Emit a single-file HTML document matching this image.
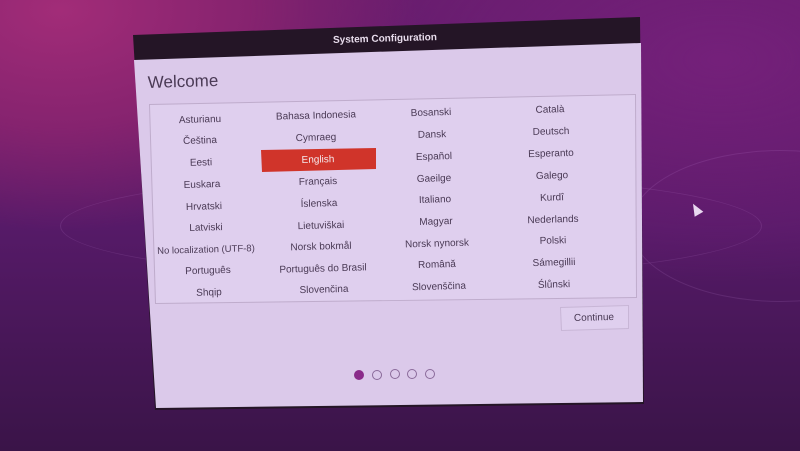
<!DOCTYPE html>
<html><head><meta charset="utf-8"><style>
html,body{margin:0;padding:0}
body{width:800px;height:451px;overflow:hidden;position:relative;font-family:"Liberation Sans",sans-serif;
background:radial-gradient(ellipse 420px 260px at 60px 10px,#a22c78 0%,#86236f 45%,transparent 85%),
radial-gradient(ellipse 500px 260px at 720px 60px,#74207a 0%,transparent 85%),
linear-gradient(180deg,#661c6c 0%,#561a68 50%,#3a1448 100%);}
.p{position:absolute;left:0;top:0;width:800px;height:451px}
.t{position:absolute;transform:translate(-50%,-50%) rotate(-1.6deg);font-size:10px;color:#4a3a55;white-space:nowrap}
.ring{position:absolute;border:1px solid rgba(200,140,220,.15);border-radius:50%}
.dot{position:absolute;width:8px;height:8px;border:1.3px solid #8a6a9a;border-radius:50%;transform:translate(-50%,-50%)}
</style></head><body>
<div class="ring" style="left:60px;top:175px;width:700px;height:100px"></div>
<div class="ring" style="left:630px;top:150px;width:300px;height:150px"></div>
<div class="p" style="background:#241526;clip-path:polygon(133px 35px,640px 17px,644px 404px,155px 410px)"></div>
<div class="p" style="background:#dbc9ea;clip-path:polygon(134px 60px,641px 43px,643px 402px,156px 408px)"></div>
<div class="p" style="background:#bfaccc;clip-path:polygon(149px 104px,636px 94px,637px 298px,155px 304px)"></div>
<div class="p" style="background:#dfcfee;clip-path:polygon(150px 105px,635px 95px,636px 297px,156px 303px)"></div>
<div class="p" style="background:#d0342a;clip-path:polygon(261px 150px,376px 148px,376px 169px,262px 172px)"></div>
<div class="p" style="background:#c8b6d6;clip-path:polygon(560px 307px,629px 305px,629px 329px,561px 331px)"></div>
<div class="p" style="background:#dfcfee;clip-path:polygon(561px 308px,628px 306px,628px 328px,562px 330px)"></div>
<div class="t" style="left:385px;top:39px;color:#e8dcec;font-weight:bold">System Configuration</div>
<div class="t" style="left:183px;top:82px;font-size:17px;color:#4a3a55">Welcome</div>
<div class="t" style="left:594px;top:318px">Continue</div>

<div class="t" style="left:200px;top:120px">Asturianu</div>
<div class="t" style="left:200px;top:141px">Čeština</div>
<div class="t" style="left:201px;top:163px">Eesti</div>
<div class="t" style="left:202px;top:185px">Euskara</div>
<div class="t" style="left:204px;top:207px">Hrvatski</div>
<div class="t" style="left:206px;top:228px">Latviski</div>
<div class="t" style="left:206px;top:250px;font-size:9.5px">No localization (UTF-8)</div>
<div class="t" style="left:208px;top:271px">Português</div>
<div class="t" style="left:209px;top:293px">Shqip</div>

<div class="t" style="left:316px;top:116px">Bahasa Indonesia</div>
<div class="t" style="left:316px;top:138px">Cymraeg</div>
<div class="t" style="left:318px;top:160px;color:#f4e8ec">English</div>
<div class="t" style="left:318px;top:182px">Français</div>
<div class="t" style="left:319px;top:204px">Íslenska</div>
<div class="t" style="left:321px;top:226px">Lietuviškai</div>
<div class="t" style="left:321px;top:247px">Norsk bokmål</div>
<div class="t" style="left:323px;top:269px">Português do Brasil</div>
<div class="t" style="left:324px;top:290px">Slovenčina</div>

<div class="t" style="left:431px;top:113px">Bosanski</div>
<div class="t" style="left:432px;top:135px">Dansk</div>
<div class="t" style="left:434px;top:157px">Español</div>
<div class="t" style="left:434px;top:179px">Gaeilge</div>
<div class="t" style="left:435px;top:200px">Italiano</div>
<div class="t" style="left:436px;top:222px">Magyar</div>
<div class="t" style="left:437px;top:244px">Norsk nynorsk</div>
<div class="t" style="left:437px;top:265px">Română</div>
<div class="t" style="left:439px;top:287px">Slovenščina</div>

<div class="t" style="left:550px;top:110px">Català</div>
<div class="t" style="left:551px;top:132px">Deutsch</div>
<div class="t" style="left:551px;top:154px">Esperanto</div>
<div class="t" style="left:552px;top:176px">Galego</div>
<div class="t" style="left:552px;top:198px">Kurdî</div>
<div class="t" style="left:553px;top:220px">Nederlands</div>
<div class="t" style="left:553px;top:241px">Polski</div>
<div class="t" style="left:554px;top:263px">Sámegillii</div>
<div class="t" style="left:554px;top:285px">Ślůnski</div>

<div class="dot" style="left:359px;top:375px;background:#8a2a8a;border-color:#8a2a8a"></div>
<div class="dot" style="left:377px;top:375px"></div>
<div class="dot" style="left:395px;top:374px"></div>
<div class="dot" style="left:412px;top:374px"></div>
<div class="dot" style="left:430px;top:374px"></div>
<div style="position:absolute;left:691px;top:203px;width:0;height:0;border-left:5px solid transparent;border-right:5px solid transparent;border-bottom:12px solid #e8d8f0;transform:rotate(-30deg)"></div>
</body></html>
